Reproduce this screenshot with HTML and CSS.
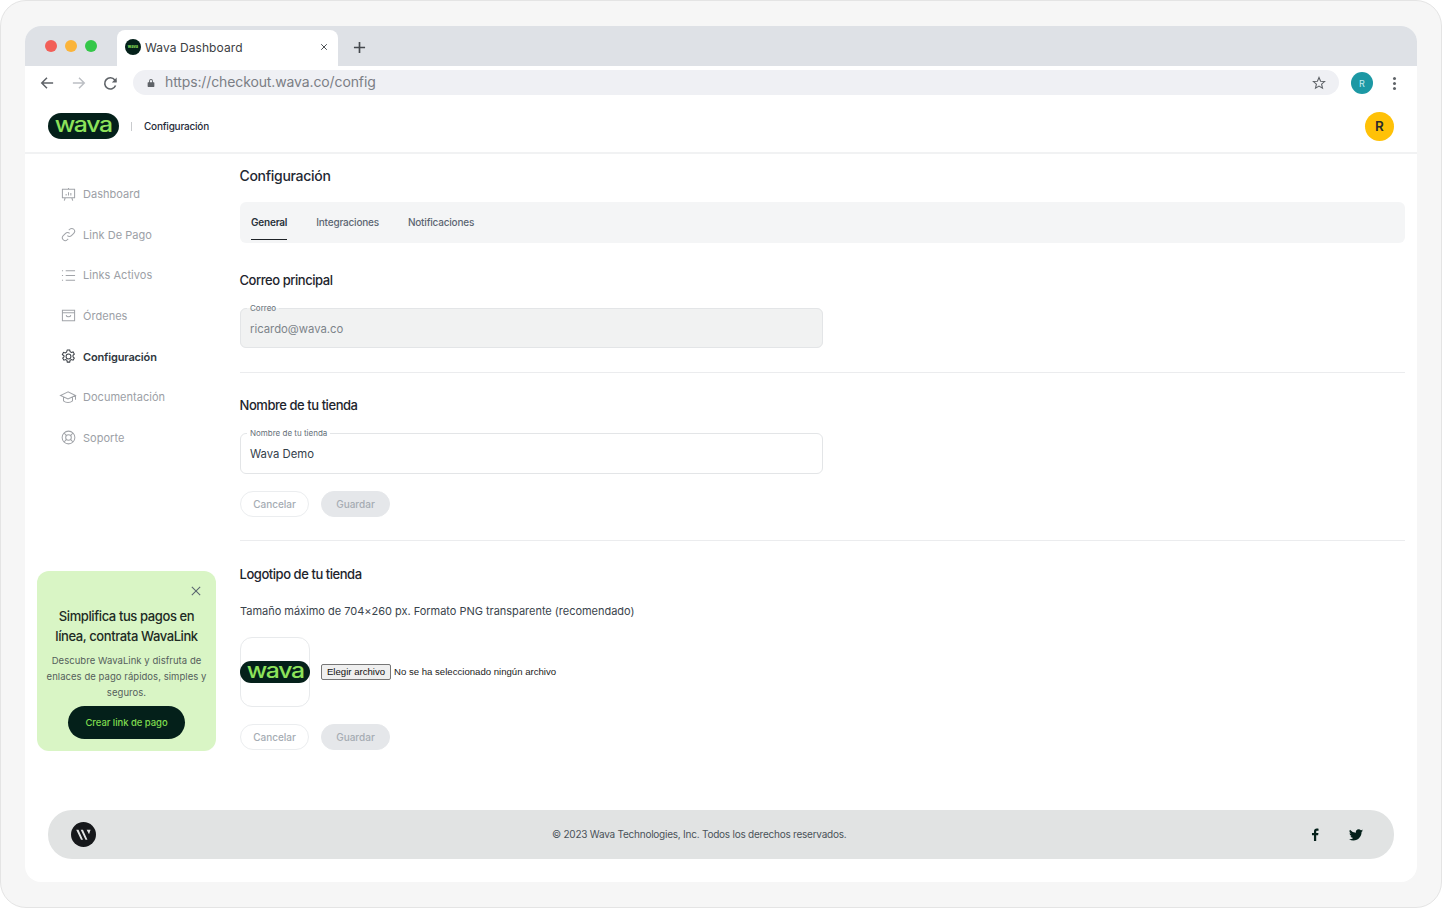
FILE: index.html
```html
<!DOCTYPE html>
<html lang="es">
<head>
<meta charset="utf-8">
<title>Wava Dashboard</title>
<link rel="stylesheet" href="styles.css">
</head>
<body>
<div class="frame">
<div class="window">
  <div class="tabstrip">
    <div class="lights"><i class="light red"></i><i class="light yellow"></i><i class="light green"></i></div>
    <div class="tab">
      <span class="favicon"><span>wava</span></span>
      <span class="tab-title">Wava Dashboard</span>
      <svg class="tab-close" viewBox="0 0 10 10"><path d="M1.5 1.5l7 7M8.5 1.5l-7 7"/></svg>
    </div>
    <svg class="tab-new" viewBox="0 0 14 14"><path d="M7 1v12M1 7h12"/></svg>
  </div>
  <div class="toolbar">
    <svg class="tool" viewBox="0 0 16 16"><path d="M15 8H2M8 2L2 8l6 6"/></svg>
    <svg class="tool tool-off" viewBox="0 0 16 16"><path d="M1 8h13M8 2l6 6-6 6"/></svg>
    <svg class="tool reload" viewBox="0 0 16 16"><path d="M13.4 10.2A6 6 0 1 1 12.6 4.2L14 6"/><path class="fill" d="M14.6 1.6v5.2H9.4z"/></svg>
    <div class="omnibox">
      <svg class="lock" viewBox="0 0 10 12"><path d="M2.6 5V3.4a2.4 2.4 0 0 1 4.8 0V5h1a.8.8 0 0 1 .8.8v4.4a.8.8 0 0 1-.8.8H1.6a.8.8 0 0 1-.8-.8V5.800a.8.8 0 0 1 .8-.8zM3.700 5h2.600V3.400a1.300 1.300 0 0 0-2.600 0z"/></svg>
      <span class="url">https://checkout.wava.co/config</span>
      <svg class="star" viewBox="0 0 14 14"><path d="M7 1.500l1.600 3.700 4 .35-3 2.650.9 3.900L7 10.050 3.500 12.100l.9-3.900-3-2.650 4-.35z"/></svg>
    </div>
    <span class="profile">R</span>
    <span class="kebab"><i></i><i></i><i></i></span>
  </div>

  <header class="apphead">
    <span class="logo"><span>wava</span></span>
    <span class="sep"></span>
    <span class="crumb">Configuración</span>
    <span class="user">R</span>
  </header>

  <div class="body">
    <aside class="sidebar">
      <nav class="nav">
        <a class="nav-item">
          <svg class="nav-icon" viewBox="0 0 16 16"><path d="M1.500 2.500h13v9h-13zM8 2.500V1M4.500 11.500l-1 3M11.500 11.500l1 3M5.500 9V7.500M8 9V5.500M10.500 9V6.500"/></svg>
          <span>Dashboard</span>
        </a>
        <a class="nav-item">
          <svg class="nav-icon" viewBox="0 0 16 16"><path d="M6.800 9.200a3 3 0 0 0 4.300 0l2.500-2.500a3 3 0 0 0-4.300-4.300L8.300 3.400M9.200 6.800a3 3 0 0 0-4.300 0L2.400 9.300a3 3 0 0 0 4.300 4.300l1-1"/></svg>
          <span>Link De Pago</span>
        </a>
        <a class="nav-item">
          <svg class="nav-icon" viewBox="0 0 16 16"><path d="M5 3h10M5 8h10M5 13h10M1 3h1.200M1 8h1.200M1 13h1.200"/></svg>
          <span>Links Activos</span>
        </a>
        <a class="nav-item">
          <svg class="nav-icon" viewBox="0 0 16 16"><path d="M1.500 2.500h13v11h-13zM1.500 5h13M5.500 7.500C6 10 10 10 10.500 7.500"/></svg>
          <span>Órdenes</span>
        </a>
        <a class="nav-item active">
          <svg class="nav-icon" viewBox="0 0 16 16"><circle cx="8" cy="8" r="2.600"/><path d="M6.700 1h2.600l.4 1.900 1.400.8 1.800-.6 1.300 2.300-1.400 1.300v1.600l1.400 1.300-1.300 2.300-1.800-.6-1.400.8-.4 1.900H6.700l-.4-1.900-1.400-.8-1.800.6-1.300-2.300 1.400-1.300V7.200L1.400 5.900l1.300-2.300 1.800.6 1.400-.8z"/></svg>
          <span>Configuración</span>
        </a>
        <a class="nav-item">
          <svg class="nav-icon grad" viewBox="0 0 18 16"><path d="M9 2L1 5.800l8 3.800 8-3.800zM4.200 7.500v4c2.500 2.400 7.100 2.400 9.600 0v-4M17 5.800v4.500"/></svg>
          <span>Documentación</span>
        </a>
        <a class="nav-item">
          <svg class="nav-icon" viewBox="0 0 16 16"><circle cx="8" cy="8" r="6.800"/><circle cx="8" cy="8" r="3"/><path d="M3.200 3.200l2.700 2.700M12.800 3.200l-2.700 2.700M3.200 12.800l2.700-2.700M12.800 12.800l-2.700-2.700"/></svg>
          <span>Soporte</span>
        </a>
      </nav>
      <section class="promo">
        <svg class="promo-close" viewBox="0 0 12 12"><path d="M1 1l10 10M11 1L1 11"/></svg>
        <h3>Simplifica tus pagos en línea, contrata WavaLink</h3>
        <p>Descubre WavaLink y disfruta de enlaces de pago rápidos, simples y seguros.</p>
        <a class="promo-btn">Crear link de pago</a>
      </section>
    </aside>

    <main class="main">
      <h1 class="page-title">Configuración</h1>
      <div class="tabs">
        <span class="tabs-item current">General</span>
        <span class="tabs-item">Integraciones</span>
        <span class="tabs-item">Notificaciones</span>
      </div>

      <section class="group first">
        <h2>Correo principal</h2>
        <fieldset class="field disabled">
          <legend>Correo</legend>
          <span class="value">ricardo@wava.co</span>
        </fieldset>
      </section>

      <section class="group second">
        <h2>Nombre de tu tienda</h2>
        <fieldset class="field">
          <legend>Nombre de tu tienda</legend>
          <span class="value">Wava Demo</span>
        </fieldset>
        <div class="actions">
          <button class="btn cancel">Cancelar</button>
          <button class="btn save">Guardar</button>
        </div>
      </section>

      <section class="group last">
        <h2>Logotipo de tu tienda</h2>
        <p class="hint">Tamaño máximo de 704×260 px. Formato PNG transparente (recomendado)</p>
        <div class="upload">
          <div class="logo-box"><span class="logo big"><span>wava</span></span></div>
          <span class="file-btn">Elegir archivo</span>
          <span class="file-name">No se ha seleccionado ningún archivo</span>
        </div>
        <div class="actions">
          <button class="btn cancel">Cancelar</button>
          <button class="btn save">Guardar</button>
        </div>
      </section>
    </main>
  </div>

  <footer class="footer">
    <svg class="footer-logo" viewBox="0 0 24 24"><circle cx="12" cy="12" r="12"/><path class="w" d="M5 7.500h2.200l4.300 9.500H9.600zM9.300 7.500h2.200l4.300 9.500h-1.900zM15 7.500h3.800l-1.500 4.200z"/></svg>
    <span class="copy">© 2023 Wava Technologies, Inc. Todos los derechos reservados.</span>
    <svg class="social fb" viewBox="0 0 10 16"><path d="M6.500 16V9h2.400l.4-2.800H6.500V4.500c0-.8.300-1.300 1.400-1.300h1.500V.7C9.100.6 8.300.500 7.300.500 5.100.5 3.700 1.800 3.700 4.200v2H1.200V9h2.500v7z"/></svg>
    <svg class="social tw" viewBox="0 0 24 20"><path d="M24 2.400c-.9.400-1.800.7-2.800.8 1-.6 1.800-1.600 2.200-2.700-1 .6-2 1-3.100 1.200A4.900 4.900 0 0 0 11.900 6.200 14 14 0 0 1 1.700.9a4.900 4.900 0 0 0 1.500 6.600c-.8 0-1.600-.2-2.200-.6 0 2.400 1.700 4.400 3.900 4.900-.7.200-1.500.2-2.200.1.600 2 2.400 3.400 4.600 3.400A9.900 9.900 0 0 1 0 17.300 14 14 0 0 0 7.500 19.500c9.100 0 14.300-7.700 14-14.600 1-.7 1.800-1.500 2.500-2.500z"/></svg>
  </footer>
</div>
</div>
</body>
</html>
```
FILE: styles.css
```css
* { box-sizing: border-box; }
html, body { margin: 0; padding: 0; }
body { width: 1442px; height: 908px; overflow: hidden; background: #fff; font-family: Inter, "Liberation Sans", sans-serif; }
h1, h2, h3, p { margin: 0; }

.frame {
  width: 1442px; height: 908px; padding: 25px 24px 25px 24px;
  background: #f6f6f6; border: 1px solid #e4e4e4; border-radius: 26px;
}
.window {
  width: 1392px; height: 856px; background: #fff;
  border-radius: 16px; overflow: hidden;
  display: flex; flex-direction: column;
}

/* Browser chrome */
.tabstrip { height: 40px; flex: none; background: #dee1e6; display: flex; align-items: flex-end; }
.lights { display: flex; gap: 8px; padding-left: 20px; width: 92px; align-self: flex-start; margin-top: 14px; }
.light { width: 12px; height: 12px; border-radius: 50%; display: block; }
.red { background: #f25f58; }
.yellow { background: #fbb43a; }
.green { background: #34c749; }
.tab {
  width: 221px; height: 36px; background: #fff; border-radius: 8px 8px 0 0;
  display: flex; align-items: center; padding: 0 10px 2px 8px; color: #3c4043;
}
.favicon { width: 16px; height: 16px; border-radius: 50%; background: #04201a; display: flex; align-items: center; justify-content: center; flex: none; }
.favicon span { font-size: 4px; font-weight: 700; color: #8de35a; line-height: 1; }
.tab-title { margin-left: 4px; font-size: 12px; letter-spacing: .08px; flex: 1; }
.tab-close { width: 8px; height: 8px; fill: none; stroke: #45494e; stroke-width: 1.200; }
.tab-new { width: 13px; height: 13px; margin: 0 0 12px 15px; fill: none; stroke: #45494e; stroke-width: 1.800; }

.toolbar { height: 34px; flex: none; display: flex; align-items: center; padding: 0 16px 0 15px; }
.tool { width: 14px; height: 14px; margin-right: 18px; fill: none; stroke: #5f6368; stroke-width: 1.700; flex: none; }
.tool.reload { width: 15px; height: 15px; margin: 0 15px 0 -1px; }
.tool-off { stroke: #bcbfc4; }
.tool .fill { fill: #5f6368; stroke: none; }
.omnibox {
  width: 1206px; height: 25px; margin-top: -1px; border-radius: 13px; background: #eff0f4;
  display: flex; align-items: center; padding: 0 13px 0 14px; flex: none;
}
.lock { width: 8px; height: 10px; fill: #5f6368; fill-rule: evenodd; flex: none; }
.url { margin-left: 10px; padding-bottom: 2px; font-size: 14px; letter-spacing: -.12px; color: #7b7e85; flex: 1; }
.star { width: 14px; height: 14px; fill: none; stroke: #5f6368; stroke-width: 1.100; }
.profile {
  width: 22px; height: 22px; margin-left: 12px; border-radius: 50%; background: #1c98a4; color: #c8edf1;
  font-size: 9px; display: flex; align-items: center; justify-content: center; flex: none;
}
.kebab { margin-left: 20px; display: flex; flex-direction: column; gap: 2px; }
.kebab i { width: 3px; height: 3px; border-radius: 50%; background: #5f6368; display: block; }

/* App header */
.apphead {
  height: 54px; flex: none; display: flex; align-items: center; padding: 0 23px;
  border-bottom: 2px solid #f1f2f3;
}
.logo {
  width: 71px; height: 26px; border-radius: 13px; background: #04201a; color: #8de35a;
  display: flex; align-items: center; justify-content: center; flex: none;
}
.logo span { font-size: 21px; line-height: 1; font-weight: 500; letter-spacing: -1.100px; transform: scaleX(1.180); margin-top: -4px; }
.logo.big { width: 70px; height: 22px; }
.logo.big span { font-size: 21px; }
.sep { width: 1px; height: 9px; margin: 0 12px; background: #c9cbce; flex: none; }
.crumb { font-size: 10px; font-weight: 500; color: #1f2a37; letter-spacing: -.22px; flex: 1; }
.user {
  width: 29px; height: 29px; border-radius: 50%; background: #ffc107; color: #2b2b2b;
  font-size: 13.500px; font-weight: 600; display: flex; align-items: center; justify-content: center;
}

/* Layout */
.body { flex: 1; display: flex; min-height: 0; }
.sidebar { width: 215px; flex: none; padding: 20px 0 0 12px; }
.nav { display: flex; flex-direction: column; height: 284px; }
.nav-item {
  height: 40.570px; display: flex; align-items: center; padding-left: 24px; gap: 7px;
  font-size: 11px; color: #9ca0a6; letter-spacing: .03px;
}
.nav-icon { width: 15px; height: 15px; fill: none; stroke: #a1a4a9; stroke-width: 1.100; flex: none; }
.nav-icon.grad { width: 18px; margin-left: -2px; margin-right: -1px; }
.active { color: #2f3740; font-weight: 600; letter-spacing: -.15px; }
.active .nav-icon { stroke: #3d4249; }

.promo {
  position: relative; width: 179px; height: 180px; margin-top: 113px; padding: 35px 8px 0;
  background: #d9f5c5; border-radius: 12px; text-align: center;
}
.promo-close { position: absolute; top: 15px; right: 15px; width: 10px; height: 10px; fill: none; stroke: #5b6770; stroke-width: 1.300; }
.promo h3 { font-size: 13px; line-height: 20px; font-weight: 500; color: #1d2a24; letter-spacing: -.4px; margin: 0 6px; }
.promo p { margin-top: 7px; font-size: 9.500px; line-height: 16px; color: #55605c; letter-spacing: .05px; }
.promo-btn {
  display: flex; align-items: center; justify-content: center; width: 117px; height: 33px; margin: 5px auto 0;
  border-radius: 17px; background: #04201a; color: #7fdc4f; font-size: 9.500px; font-weight: 500; letter-spacing: -.05px;
}

.main { flex: 1; min-width: 0; padding: 13px 12px 0 0; }
.page-title { margin-left: -.5px; font-size: 14px; line-height: 18px; font-weight: 500; color: #1f2933; letter-spacing: -.3px; }
.tabs {
  height: 41px; margin-top: 17px; background: #f4f5f6; border-radius: 6px;
  display: flex; gap: 29px; padding: 0 11px;
}
.tabs-item { display: flex; align-items: center; height: 39px; font-size: 10px; font-weight: 500; color: #5c6672; letter-spacing: -.2px; }
.tabs-item.current { color: #2a323a; font-weight: 600; border-bottom: 1.500px solid #1f2327; height: 38px; padding-top: 2px; }
.group { padding: 25px 0 23px; border-bottom: 1px solid #ebecee; }
.group.first { padding-top: 29px; padding-bottom: 24px; }
.group.second { padding-top: 24px; }
.group.last { border-bottom: 0; padding-top: 25px; padding-bottom: 0; }
.group h2 { font-size: 13px; line-height: 17px; font-weight: 500; color: #1d242c; letter-spacing: -.45px; margin-left: -.5px; }
.field {
  width: 583px; height: 45px; margin: 15px 0 0; padding: 0 9px;
  border: 1px solid #e3e5e7; border-radius: 6px; display: block;
}
.field legend { padding: 0 3px; margin-left: -3px; font-size: 8px; line-height: 8px; color: #667078; }
.field .value { display: block; margin-top: 7px; font-size: 11.300px; line-height: 20px; color: #34404a; }
.field.disabled { background: #f1f2f2; height: 44px; }
.disabled .value { color: #7d848a; }
.actions { display: flex; gap: 12px; margin-top: 17px; }
.btn {
  width: 69px; height: 26px; border-radius: 13px; font: 500 10px Inter, sans-serif; color: #a5acb3;
  border: 1px solid #ebedef; background: #fff; padding: 0;
}
.btn.save { background: #e5e7ea; border-color: #e5e7ea; }
.hint { margin-top: 21px; font-size: 11px; line-height: 14px; color: #3a444c; letter-spacing: -.02px; }
.upload { display: flex; align-items: center; margin-top: 19px; }
.logo-box {
  width: 70px; height: 70px; margin-right: 11px; border: 1px solid #e8eaec; border-radius: 12px;
  display: flex; align-items: center; justify-content: center; flex: none;
}
.file-btn {
  width: 70px; height: 16px; margin-right: 3px; background: #efefef; border: 1px solid #767676; border-radius: 2px;
  font: 9.600px/14px "Liberation Sans", Arial, sans-serif; color: #111; text-align: center;
}
.file-name { padding-bottom: 1px; font: 9.600px "Liberation Sans", Arial, sans-serif; color: #222; }

.footer {
  height: 49px; flex: none; margin: 0 23px 23px; background: #e1e3e3; border-radius: 24px;
  display: flex; align-items: center; padding: 0 31px 0 23px;
}
.footer-logo { width: 25px; height: 25px; fill: #16181b; flex: none; }
.footer-logo .w { fill: #e1e3e3; }
.copy { flex: 1; margin-left: 456px; padding-bottom: 1px; font-size: 10px; color: #4a5259; letter-spacing: -.23px; }
.social { fill: #04201a; flex: none; }
.fb { width: 8px; height: 13px; margin-right: 30px; }
.tw { width: 14px; height: 12px; }
```
